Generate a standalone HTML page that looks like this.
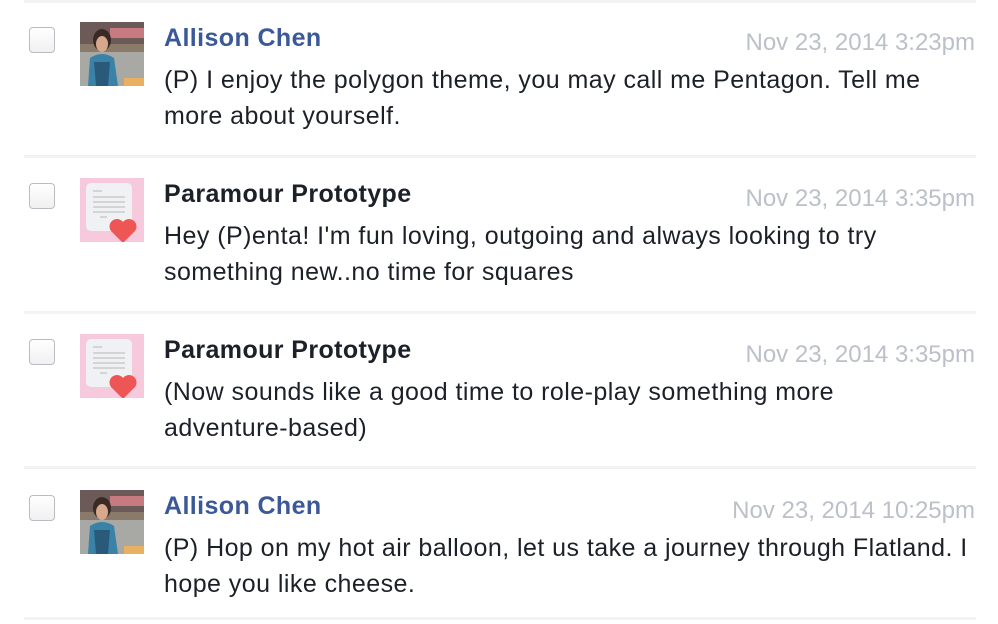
<!DOCTYPE html>
<html><head><style>
body{margin:0;width:998px;height:620px;background:#fff;font-family:"Liberation Sans",Arial,sans-serif;overflow:hidden;position:relative}
.sep{position:absolute;left:24px;width:952px;height:3px;background:#f2f3f4}
.row{position:absolute;left:0;width:998px;height:156px}
.cb{position:absolute;left:29px;top:27px;width:24px;height:24px;border:1px solid #b9bcc0;border-radius:4px;background:linear-gradient(#fff,#f0f0f0)}
.av{position:absolute;left:80px;top:22px;width:64px;height:64px;overflow:hidden}
.name{position:absolute;left:164px;top:24px;font-size:25px;letter-spacing:0.4px;font-weight:bold;color:#1c2028}
.name.blue{color:#3b5998}
.date{position:absolute;right:23px;top:29px;font-size:24px;color:#bcc0c8}
.msg{position:absolute;left:164px;top:62px;width:830px;font-size:25px;letter-spacing:0.45px;line-height:36px;color:#1c2028;white-space:nowrap}
</style></head><body>
<div class="sep" style="top:0"></div>
<div class="sep" style="top:155px"></div>
<div class="sep" style="top:311px"></div>
<div class="sep" style="top:466px"></div>
<div class="sep" style="top:617px"></div>

<div class="row" style="top:0">
<div class="cb"></div>
<div class="av"><svg width="64" height="64"><rect width="64" height="64" fill="#8a7a6a"/><rect width="64" height="22" fill="#6b5a58"/><rect x="30" y="6" width="34" height="10" fill="#c77a80"/><rect x="0" y="30" width="64" height="34" fill="#a8a8a4"/><ellipse cx="22" cy="18" rx="9" ry="11" fill="#3a2a26"/><ellipse cx="22" cy="22" rx="6" ry="8" fill="#d7a88c"/><path d="M8 64 L10 36 Q22 28 34 36 L38 64Z" fill="#3b82a8"/><path d="M14 40 L30 40 L28 64 L16 64Z" fill="#2a5a7a"/><rect x="44" y="56" width="20" height="8" fill="#e8b060"/></svg></div>
<div class="name blue">Allison Chen</div>
<div class="date">Nov 23, 2014 3:23pm</div>
<div class="msg">(P) I enjoy the polygon theme, you may call me Pentagon. Tell me<br>more about yourself.</div>
</div>

<div class="row" style="top:156px">
<div class="cb"></div>
<div class="av"><svg width="64" height="64"><rect width="64" height="64" fill="#f7c9dc"/><rect x="6" y="5" width="46" height="48" rx="5" fill="#f0f1f3"/><g stroke="#c8cacd" stroke-width="1.5"><line x1="13" y1="13" x2="22" y2="13"/><line x1="13" y1="19" x2="45" y2="19"/><line x1="13" y1="24" x2="45" y2="24"/><line x1="13" y1="29" x2="45" y2="29"/><line x1="13" y1="34" x2="45" y2="34"/><line x1="20" y1="39" x2="27" y2="39"/></g><path d="M43 65 L31 53 A7 7 0 0 1 43 44 A7 7 0 0 1 55 53Z" fill="#ee5656"/></svg></div>
<div class="name">Paramour Prototype</div>
<div class="date">Nov 23, 2014 3:35pm</div>
<div class="msg">Hey (P)enta! I'm fun loving, outgoing and always looking to try<br>something new..no time for squares</div>
</div>

<div class="row" style="top:312px">
<div class="cb"></div>
<div class="av"><svg width="64" height="64"><rect width="64" height="64" fill="#f7c9dc"/><rect x="6" y="5" width="46" height="48" rx="5" fill="#f0f1f3"/><g stroke="#c8cacd" stroke-width="1.5"><line x1="13" y1="13" x2="22" y2="13"/><line x1="13" y1="19" x2="45" y2="19"/><line x1="13" y1="24" x2="45" y2="24"/><line x1="13" y1="29" x2="45" y2="29"/><line x1="13" y1="34" x2="45" y2="34"/><line x1="20" y1="39" x2="27" y2="39"/></g><path d="M43 65 L31 53 A7 7 0 0 1 43 44 A7 7 0 0 1 55 53Z" fill="#ee5656"/></svg></div>
<div class="name">Paramour Prototype</div>
<div class="date">Nov 23, 2014 3:35pm</div>
<div class="msg">(Now sounds like a good time to role-play something more<br>adventure-based)</div>
</div>

<div class="row" style="top:468px">
<div class="cb"></div>
<div class="av"><svg width="64" height="64"><rect width="64" height="64" fill="#8a7a6a"/><rect width="64" height="22" fill="#6b5a58"/><rect x="30" y="6" width="34" height="10" fill="#c77a80"/><rect x="0" y="30" width="64" height="34" fill="#a8a8a4"/><ellipse cx="22" cy="18" rx="9" ry="11" fill="#3a2a26"/><ellipse cx="22" cy="22" rx="6" ry="8" fill="#d7a88c"/><path d="M8 64 L10 36 Q22 28 34 36 L38 64Z" fill="#3b82a8"/><path d="M14 40 L30 40 L28 64 L16 64Z" fill="#2a5a7a"/><rect x="44" y="56" width="20" height="8" fill="#e8b060"/></svg></div>
<div class="name blue">Allison Chen</div>
<div class="date">Nov 23, 2014 10:25pm</div>
<div class="msg">(P) Hop on my hot air balloon, let us take a journey through Flatland. I<br>hope you like cheese.</div>
</div>
</body></html>
